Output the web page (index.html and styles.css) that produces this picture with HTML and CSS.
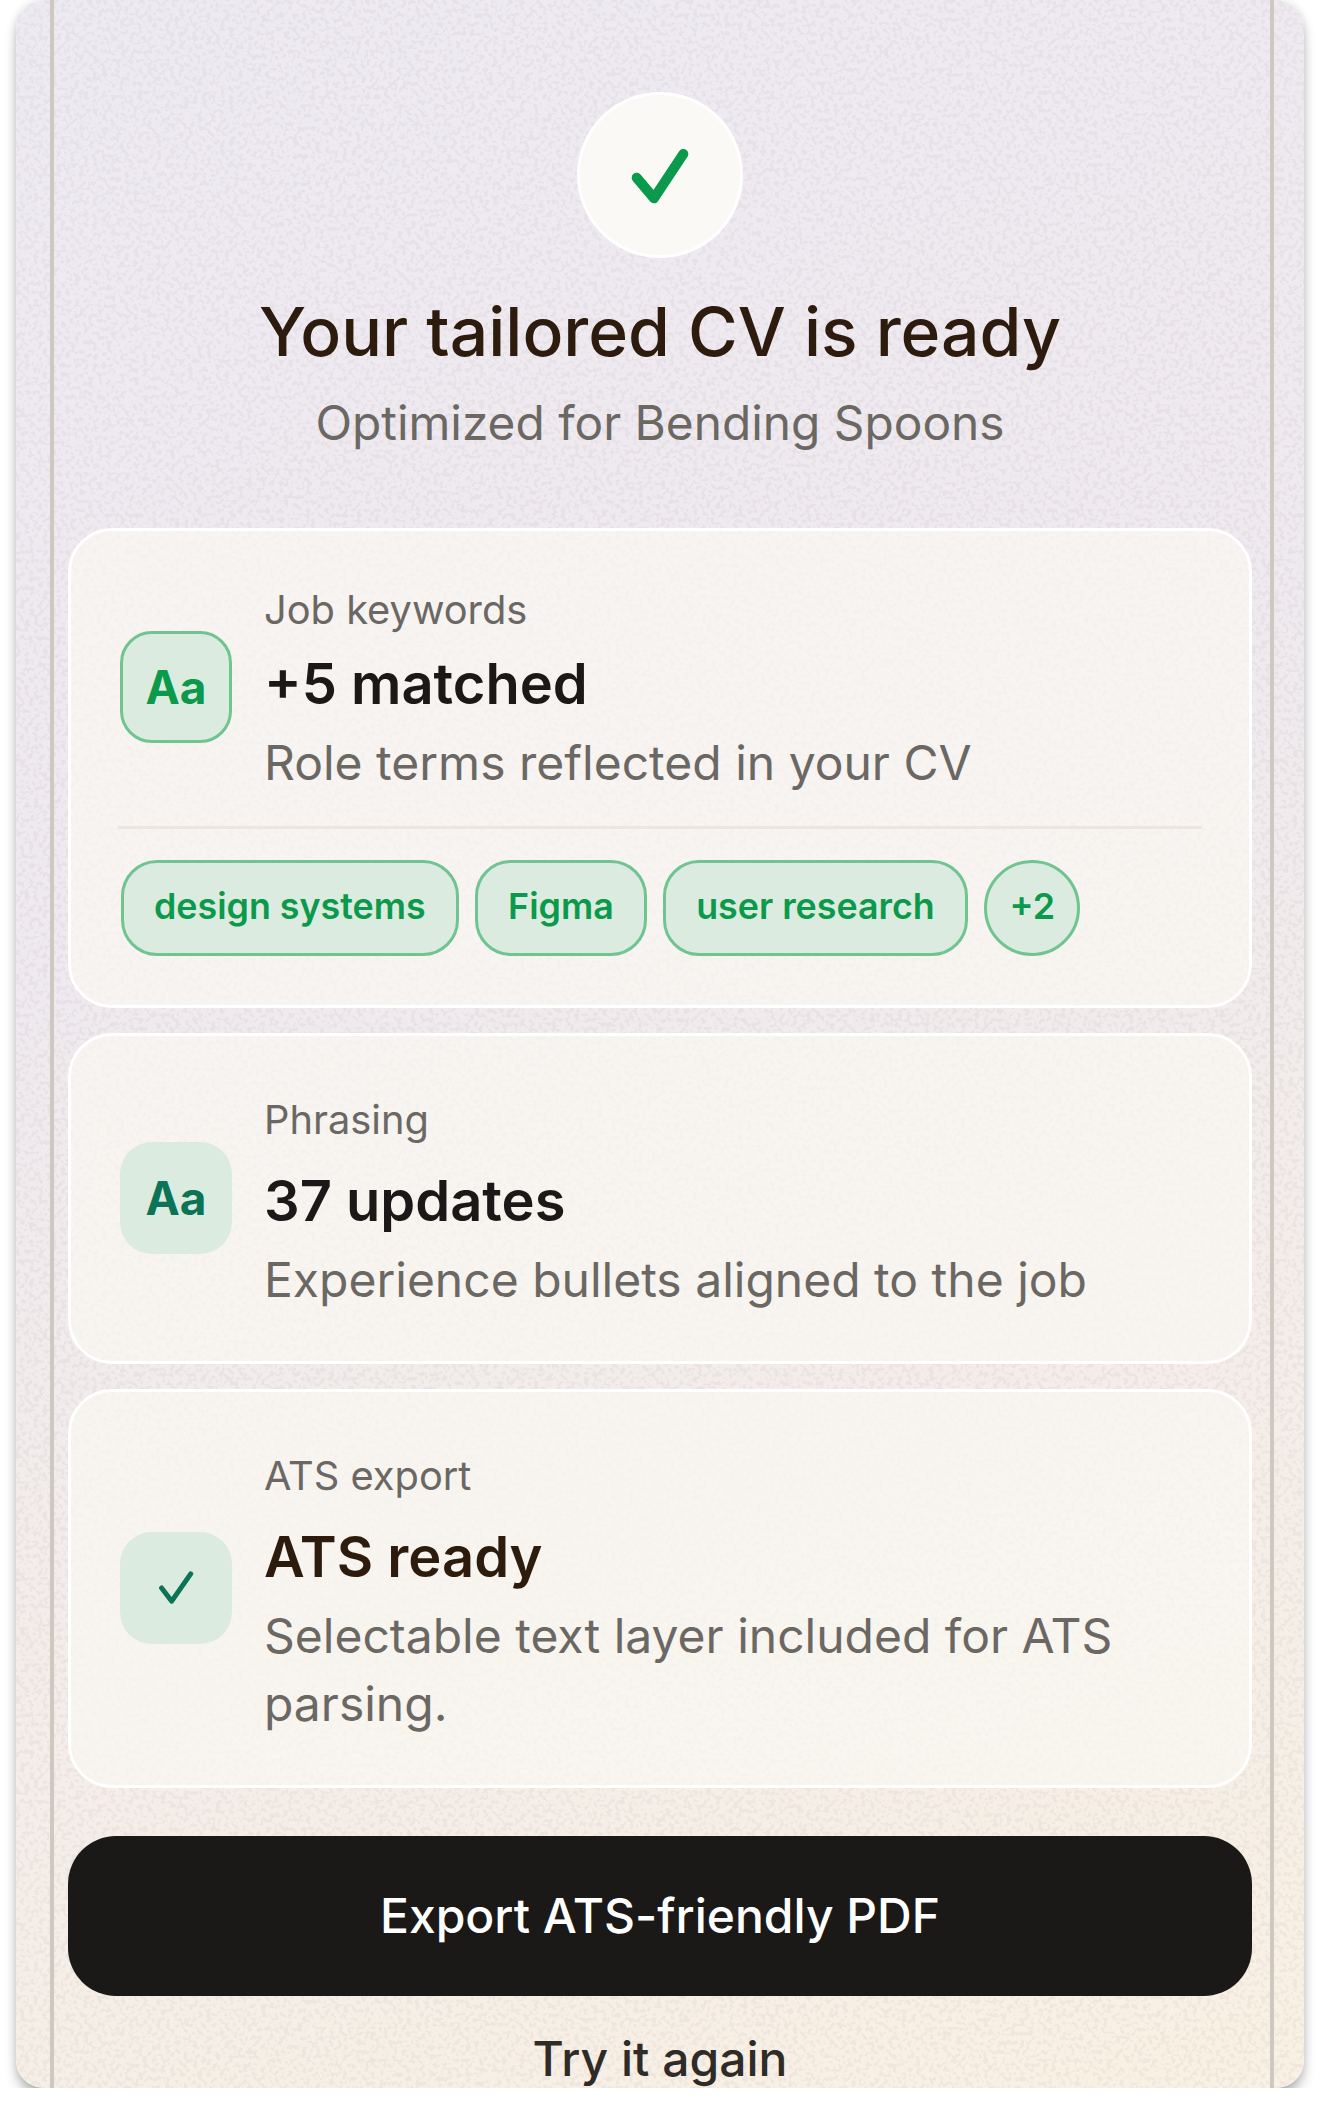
FILE: index.html
```html
<!DOCTYPE html>
<html lang="en">
<head>
	<meta charset="UTF-8">
	<title>Your tailored CV is ready</title>
	<link rel="stylesheet" href="styles.css">
</head>
<body>
	<div class="phone">
		<svg class="grain" width="100%" height="100%" aria-hidden="true">
			<filter id="grainFilter" x="0" y="0" width="100%" height="100%">
				<feTurbulence type="fractalNoise" baseFrequency="0.22" numOctaves="2" seed="7"/>
				<feColorMatrix type="matrix" values="0 0 0 0 0.4  0 0 0 0 0.36  0 0 0 0 0.38  9 0 0 0 -4.5"/>
			</filter>
			<rect width="100%" height="100%" filter="url(#grainFilter)"/>
		</svg>
		<div class="content">
			<div class="badge">
				<svg width="60" height="60" viewBox="0 0 60 60" fill="none">
					<path d="M6.7 32.7L24 53.3L53.3 9" stroke="#0b9a4b" stroke-width="10" stroke-linecap="round" stroke-linejoin="round"/>
				</svg>
			</div>
			<h1 class="title">Your tailored CV is ready</h1>
			<p class="subtitle">Optimized for Bending Spoons</p>

			<div class="card card-first">
				<div class="row">
					<div class="icon icon-outline">Aa</div>
					<div class="text">
						<div class="label">Job keywords</div>
						<div class="value">+5 matched</div>
						<div class="desc">Role terms reflected in your CV</div>
					</div>
				</div>
				<div class="chips">
					<span class="chip">design systems</span>
					<span class="chip">Figma</span>
					<span class="chip">user research</span>
					<span class="chip chip-round">+2</span>
				</div>
			</div>

			<div class="card">
				<div class="row">
					<div class="icon">Aa</div>
					<div class="text">
						<div class="label">Phrasing</div>
						<div class="value">37 updates</div>
						<div class="desc">Experience bullets aligned to the job</div>
					</div>
				</div>
			</div>

			<div class="card">
				<div class="row">
					<div class="icon">
						<svg width="36" height="36" viewBox="0 0 36 36" fill="none">
							<path d="M3.6 18L13.7 31.2L32.7 3.8" stroke="#0b7456" stroke-width="5" stroke-linecap="round" stroke-linejoin="round"/>
						</svg>
					</div>
					<div class="text">
						<div class="label">ATS export</div>
						<div class="value value-brown">ATS ready</div>
						<div class="desc">Selectable text layer included for ATS parsing.</div>
					</div>
				</div>
			</div>

			<button class="export" type="button">Export ATS-friendly PDF</button>
			<div class="again">Try it again</div>
		</div>
	</div>
</body>
</html>
```

FILE: styles.css
```css
* { box-sizing: border-box; }
body { margin: 0; background: #fff; font-family: Inter, "Liberation Sans", sans-serif; }

.phone {
	position: relative;
	height: 2088px;
	margin: 0 16px;
	border-radius: 28px;
	overflow: hidden;
	background: linear-gradient(162deg, #eeeaf2 0%, #efeaef 40%, #f4ede9 70%, #f9f1e3 100%);
	box-shadow: 0 10px 14px -2px rgba(0, 0, 0, .3), 0 0 8px rgba(0, 0, 0, .1);
}
.phone::before, .phone::after {
	content: "";
	position: absolute;
	top: 0;
	bottom: 0;
	width: 4px;
	background: #cdc9c0;
	z-index: 1;
}
.phone::before { left: 34px; }
.phone::after { right: 30px; }
.grain { position: absolute; top: 0; left: 0; opacity: .11; }

.content {
	position: relative;
	z-index: 2;
	display: flex;
	flex-direction: column;
	align-items: center;
	padding: 92px 52px 0;
}
.badge {
	width: 166px;
	height: 166px;
	border-radius: 50%;
	background: #fbf9f5;
	border: 3px solid #fff;
	display: flex;
	align-items: center;
	justify-content: center;
}
.title {
	margin: 33px 0 0;
	font-size: 67.8px;
	line-height: 80px;
	font-weight: 500;
	color: #2d1c0e;
}
.subtitle {
	margin: 20px 0 0;
	font-size: 47.8px;
	line-height: 64px;
	color: #6b6863;
}

.card {
	width: 100%;
	margin-top: 25px;
	padding: 45px 49px 47px;
	background: rgba(250, 247, 242, .74);
	border: 3px solid #fff;
	border-radius: 44px;
}
.card-first { margin-top: 73px; padding-top: 40px; padding-bottom: 49px; }
.row { display: flex; align-items: center; gap: 32px; }
.icon {
	flex: none;
	width: 112px;
	height: 112px;
	border-radius: 32px;
	background: #dcebdf;
	color: #0b7456;
	font-size: 46px;
	font-weight: 700;
	display: flex;
	align-items: center;
	justify-content: center;
}
.icon-outline { border: 3px solid #6fc491; color: #0b9a4b; }
.text { padding-top: 14px; }
.label { font-size: 39.8px; line-height: 49px; color: #6b6863; }
.value { margin-top: 19px; font-size: 56px; line-height: 76px; font-weight: 600; color: #1a1918; }
.value-brown { color: #2d1c0e; }
.desc { margin-top: 7px; font-size: 48px; line-height: 68px; color: #6b6863; }

.card-first .text { padding-bottom: 6px; }
.card-first .value { margin-top: 12px; }

.chips {
	display: flex;
	gap: 16.5px;
	margin: 23px -2px 0;
	padding: 31px 3px 0;
	border-top: 3px solid #ebe6e2;
}
.chip {
	height: 96px;
	padding: 0 30px;
	border: 3px solid #6fc491;
	border-radius: 36px;
	background: #dcebdf;
	color: #0b9a4b;
	font-size: 35.8px;
	font-weight: 600;
	line-height: 86px;
}
.chip-round { width: 96px; padding: 0; border-radius: 50%; text-align: center; }

.export {
	width: 100%;
	height: 160px;
	margin-top: 48px;
	padding-bottom: 2px;
	border: 0;
	border-radius: 48px;
	background: #1a1918;
	color: #fff;
	font: 500 48px Inter, "Liberation Sans", sans-serif;
}
.again {
	margin-top: 33px;
	font-size: 48px;
	line-height: 60px;
	font-weight: 500;
	color: #2f2b27;
}
```
